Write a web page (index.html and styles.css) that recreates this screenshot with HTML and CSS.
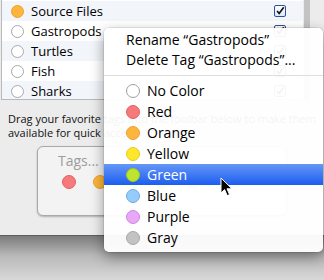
FILE: index.html
```html
<!DOCTYPE html>
<html>
<head>
<meta charset="utf-8">
<link rel="stylesheet" href="styles.css">
</head>
<body>
<div class="window">
  <div class="top">
    <div class="list">
      <div class="row alt"><span class="dot filled-orange"></span><span class="name">Source Files</span><span class="check"><svg viewBox="0 0 12 12" width="12" height="12"><path d="M2.5 6 L5 9 L10.5 1.5" fill="none" stroke="#111" stroke-width="2"/></svg></span></div>
      <div class="row"><span class="dot"></span><span class="name">Gastropods</span><span class="check"><svg viewBox="0 0 12 12" width="12" height="12"><path d="M2.5 6 L5 9 L10.5 1.5" fill="none" stroke="#111" stroke-width="2"/></svg></span></div>
      <div class="row alt"><span class="dot"></span><span class="name">Turtles</span><span class="check"><svg viewBox="0 0 12 12" width="12" height="12"><path d="M2.5 6 L5 9 L10.5 1.5" fill="none" stroke="#111" stroke-width="2"/></svg></span></div>
      <div class="row"><span class="dot"></span><span class="name">Fish</span><span class="check"><svg viewBox="0 0 12 12" width="12" height="12"><path d="M2.5 6 L5 9 L10.5 1.5" fill="none" stroke="#111" stroke-width="2"/></svg></span></div>
      <div class="row alt"><span class="dot"></span><span class="name">Sharks</span><span class="check"><svg viewBox="0 0 12 12" width="12" height="12"><path d="M2.5 6 L5 9 L10.5 1.5" fill="none" stroke="#111" stroke-width="2"/></svg></span></div>
    </div>
    <div class="bar"></div>
  </div>
  <p class="hint">Drag your favorite tags into the toolbar below to make them<br>available for quick access.</p>
  <div class="tagbox">
    <div class="tagtitle">Tags...</div>
    <div class="tagdots">
      <span class="bdot c-red"></span>
      <span class="bdot c-orange"></span>
      <span class="bdot c-yellow"></span>
      <span class="bdot c-green"></span>
      <span class="bdot c-blue"></span>
      <span class="bdot c-purple"></span>
    </div>
  </div>
</div>
<div class="desk"></div>

<div class="menu">
  <div class="item">Rename “Gastropods”</div>
  <div class="item">Delete Tag “Gastropods”...</div>
  <div class="sep"></div>
  <div class="citem"><span class="mdot c-none"></span>No Color</div>
  <div class="citem"><span class="mdot c-red"></span>Red</div>
  <div class="citem"><span class="mdot c-orange"></span>Orange</div>
  <div class="citem"><span class="mdot c-yellow"></span>Yellow</div>
  <div class="citem hl"><span class="mdot c-green"></span>Green</div>
  <div class="citem"><span class="mdot c-blue"></span>Blue</div>
  <div class="citem"><span class="mdot c-purple"></span>Purple</div>
  <div class="citem"><span class="mdot c-gray"></span>Gray</div>
</div>

<svg class="cursor" width="14" height="20" viewBox="0 0 14 20">
  <path d="M1 1 L1 16 L4.6 12.6 L7.2 18.6 L9.6 17.6 L7 11.8 L12 11.8 Z" fill="#000" stroke="#fff" stroke-width="1" stroke-linejoin="round"/>
</svg>
</body>
</html>
```
FILE: styles.css
```css
html, body {
  margin: 0;
  padding: 0;
}
body {
  width: 324px;
  height: 280px;
  overflow: hidden;
  position: relative;
  font-family: "Open Sans", sans-serif;
  background: #d6d6d6;
  color: #000;
}
.window {
  height: 235px;
  background: #ececec;
  border-bottom: 1px solid #5e5e5e;
  overflow: hidden;
}
.top {
  display: flex;
  height: 101px;
}
.list {
  margin-left: 1px;
  width: 302px;
  height: 100px;
  border-left: 1px solid #b9b9b9;
  border-bottom: 1px solid #b9b9b9;
  background: #fff;
  padding-top: 1px;
  box-sizing: border-box;
  overflow: hidden;
}
.bar {
  width: 6px;
  height: 100px;
  margin-left: 1px;
  background: #c3c3c3;
}
.row {
  height: 20px;
  display: flex;
  align-items: center;
  font-size: 13px;
  line-height: 20px;
}
.row.alt {
  background: #f2f5fa;
}
.dot {
  width: 11px;
  height: 11px;
  border-radius: 50%;
  border: 1px solid #a9a9a9;
  background: #fff;
  margin-left: 9px;
  margin-right: 7px;
  flex: none;
}
.dot.filled-orange {
  background: #fdb53b;
  border-color: #eaa22c;
}
.name {
  flex: 1;
}
.check {
  width: 12px;
  height: 12px;
  margin-right: 17px;
  box-sizing: border-box;
  border: 1px solid #2f4f96;
  border-radius: 2px;
  background: linear-gradient(#ffffff, #dce7f7);
  display: flex;
  align-items: center;
  justify-content: center;
}
.check svg {
  width: 10px;
  height: 10px;
}
.hint {
  margin: 11px 0 0 8px;
  font-size: 11px;
  line-height: 14px;
  white-space: nowrap;
  color: #111;
}
.tagbox {
  margin: 6px 0 0 37px;
  width: 250px;
  height: 70px;
  box-sizing: border-box;
  border: 1px solid #a9a9a9;
  border-radius: 6px;
  background: #f3f3f3;
  box-shadow: 0 1px 2px rgba(0,0,0,0.25);
  padding: 5px 0 0 20px;
}
.tagtitle {
  font-size: 14px;
  line-height: 17px;
  color: #9c9c9c;
}
.tagdots {
  display: flex;
  gap: 17px;
  margin-top: 6px;
  margin-left: 4px;
}
.bdot {
  width: 14px;
  height: 14px;
  border-radius: 50%;
  box-sizing: border-box;
  border: 1px solid transparent;
}
.desk {
  height: 44px;
  background: linear-gradient(#7b7b7b, #b9b9b9 45%, #d8d8d8);
}
.menu {
  position: absolute;
  left: 104px;
  top: 28px;
  width: 219px;
  height: 224px;
  box-sizing: border-box;
  padding: 2px 0 4px;
  border-radius: 5px;
  background: rgba(255,255,255,0.95);
  box-shadow: 0 5px 14px rgba(0,0,0,0.4), 0 0 0 0.5px rgba(0,0,0,0.15);
  font-size: 14px;
}
.item {
  height: 20px;
  line-height: 20px;
  padding-left: 22px;
  white-space: nowrap;
}
.sep {
  height: 1px;
  background: #dedede;
  margin: 5px 0 4px;
}
.citem {
  height: 21px;
  line-height: 21px;
  padding-left: 22px;
  display: flex;
  align-items: center;
}
.citem.hl {
  background: linear-gradient(#6597f6, #1c5df0);
  color: #fff;
}
.mdot {
  width: 14px;
  height: 14px;
  border-radius: 50%;
  box-sizing: border-box;
  border: 1px solid;
  margin-right: 7px;
  flex: none;
}
.c-none { background: #fff; border-color: #9d9d9d; }
.c-red { background: #f67a7b; border-color: #e46163; }
.c-orange { background: #fdb63d; border-color: #eba22d; }
.c-yellow { background: #fce72c; border-color: #e6cc1f; }
.c-green { background: #bde42e; border-color: #a1c81f; }
.c-blue { background: #95ccfb; border-color: #6fabe4; }
.c-purple { background: #e8a8f7; border-color: #cd87e2; }
.c-gray { background: #c3c3c3; border-color: #a8a8a8; }
.cursor {
  position: absolute;
  left: 220px;
  top: 177px;
}
```
